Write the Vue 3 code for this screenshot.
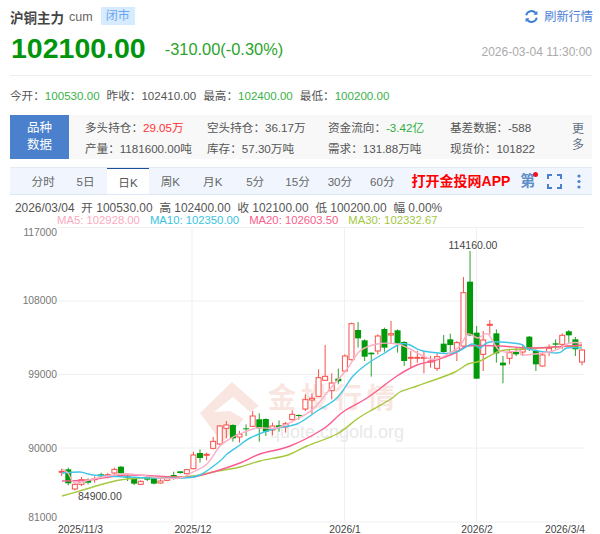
<script setup>
const z5 = [
['r',211,212,203,225],['g',205,247,200,253],['r',250,264,247,268],['r',236,250,228,255],['g',236,245,232,250],['r',233,236,226,245],['g',220,226,215,232],['r',221,225,216,232],['r',205,216,200,220],['g',197,217,195,219],
['g',226,230,222,240],['g',233,248,228,252],['r',241,250,238,252],['g',229,236,226,240],['g',232,248,228,250],['r',240,246,235,248],['r',230,238,226,241],['g',222,230,212,236],['g',211,216,210,218],['r',206,218,204,220],
['r',162,203,152,205],['g',156,171,145,185],['r',160,162,155,178],['r',121,142,108,145],['r',75,129,72,132],['r',72,82,60,112],['g',72,112,70,122],['r',100,108,90,125]]
const z6 = [
['g',322,325,310,345],['r',285,316,270,318],['g',295,322,277,362],['g',294,332,292,345],['r',315,327,305,343],['g',313,318,298,332],['r',308,318,303,335],['r',280,296,268,298],['g',282,285,280,296],['r',236,264,220,270],
['r',232,237,218,280],['r',170,226,145,228],['r',166,178,72,180],['r',186,209,157,235],['g',173,181,143,190],['r',105,150,100,155],['r',8,116,5,118],['g',27,52,3,80],['g',58,107,55,120],['g',95,100,95,167],
['r',45,90,40,100],['g',24,80,20,92]]
const z8 = [['r',98,102,60,127],['g',88,127,85,155]]
const z7 = [
['g',318,375,315,390],['r',364,366,345,395],['r',364,366,345,380],['r',364,366,345,412],['r',375,378,360,395],['r',362,397,352,405],['g',323,348,297,350],['g',310,327,293,350],['r',320,345,315,375],['r',170,330,123,332],
['g',137,298,45,300],['g',290,428,270,428],['r',312,355,285,405],['r',265,268,252,295],['g',292,352,280,380],['g',380,388,360,442],['r',350,367,340,385],['g',348,355,335,360],['r',340,348,325,360],['g',302,340,300,345],
['g',345,385,340,405],['r',357,390,345,392],['r',337,349,325,360],['g',322,326,310,340],['r',298,325,292,340],['g',286,298,282,320],['g',310,340,303,360],['r',342,378,340,388]]

const toReal = (rows, y0) => rows.map(([c, a, b, t, u]) => ({
  c, top: y0 + a / 3, bot: y0 + b / 3, wt: y0 + t / 3, wb: y0 + u / 3
}))
const candles = [...toReal(z5, 400), ...toReal(z6, 320), ...toReal(z8, 300), ...toReal(z7, 235)]
  .map((d, i) => ({ ...d, x: 61.7 + i * 6.586, h: Math.max(d.bot - d.top, 1) }))

// Catmull-Rom through the sampled points, so the averages read as curves.
const smooth = (str) => {
  const p = str.split(' ').map((s) => s.split(',').map(Number))
  let d = `M${p[0][0]} ${p[0][1]}`
  for (let i = 0; i < p.length - 1; i++) {
    const a = p[i - 1] || p[i], b = p[i], c = p[i + 1], e = p[i + 2] || c
    const k = 6
    d += `C${(b[0] + (c[0] - a[0]) / k).toFixed(1)} ${(b[1] + (c[1] - a[1]) / k).toFixed(1)} ${(c[0] - (e[0] - b[0]) / k).toFixed(1)} ${(c[1] - (e[1] - b[1]) / k).toFixed(1)} ${c[0]} ${c[1]}`
  }
  return d
}
const lines = [
  { color: '#a6c83e', pts: '62,495 83,489 103,483 120,479 140,477 173,476 193,475 213,471 240,466 260,460 288,454 307,445 337,433 357,418 370,410 391,398 400,391 417,385 437,378 455,371 468,363 480,360 500,350 520,348 573,345 582,345' },
  { color: '#fb5c8e', pts: '62,480 90,479 127,474 173,476 193,476 213,471 240,462 260,453 290,445 323,428 343,411 367,397 397,375 417,364 433,360 455,352 468,345 500,345 533,347 582,344' },
  { color: '#3fc6e6', pts: '62,472 80,471 93,474 127,476 153,477 183,477 200,474 220,460 227,453 240,444 250,437 273,428 297,423 317,410 337,397 353,375 367,363 383,353 400,343 410,344 423,350 453,352 472,343 480,347 490,341 520,343 528,348 557,352 567,347 582,347' },
  { color: '#fcaec4', pts: '62,468 68,472 75,482 93,478 120,473 140,474 160,477 180,477 193,471 207,463 220,445 233,436 240,433 257,427 277,427 297,418 313,408 330,388 347,368 360,350 377,343 397,343 410,348 427,357 437,358 450,352 460,345 468,333 478,337 488,333 500,350 520,350 523,354 553,350 570,342 582,342' }
].map((l) => ({ color: l.color, d: smooth(l.pts) }))
const hGrid = [226.5, 300, 373.5, 447, 521]
const vGrid = [192, 344.5, 476.5]
const yLabels = [['117000', 235], ['108000', 303], ['99000', 377], ['90000', 451], ['81000', 520]]
const xLabels = [['2025/11/3', 58, 'start'], ['2025/12', 193, 'middle'], ['2026/1', 345, 'middle'], ['2026/2', 477, 'middle'], ['2026/3/4', 585, 'end']]
const tabs = ['分时', '5日', '日K', '周K', '月K', '5分', '15分', '30分', '60分']
const mas = [
  { t: 'MA5: 102928.00', c: 'pink' }, { t: 'MA10: 102350.00', c: 'cyan' },
  { t: 'MA20: 102603.50', c: 'rose' }, { t: 'MA30: 102332.67', c: 'olive' }
]
</script>

<template>
  <div class="page">
    <header class="top">
      <div class="title">
        <strong>沪铜主力</strong><span class="code">cum</span><span class="tag">闭市</span>
      </div>
      <div class="refresh">
        <svg width="15" height="15" viewBox="0 0 15 15" fill="none">
          <path d="M2.2 6.2A5.4 5.4 0 0 1 11.6 4" stroke="#3f7fd6" stroke-width="2"/>
          <path d="M12.8 8.8A5.4 5.4 0 0 1 3.4 11" stroke="#3f7fd6" stroke-width="2"/>
          <path d="M13.4 1.8v4h-4zM1.6 13.2v-4h4z" fill="#3f7fd6"/>
        </svg>
        <span>刷新行情</span>
      </div>
    </header>
    <div class="price-row">
      <span class="price">102100.00</span>
      <span class="change">-310.00(-0.30%)</span>
      <span class="time">2026-03-04 11:30:00</span>
    </div>
    <div class="stats">
      <span>今开：<b>100530.00</b></span>
      <span>昨收：<i>102410.00</i></span>
      <span>最高：<b>102400.00</b></span>
      <span>最低：<b>100200.00</b></span>
    </div>
    <section class="panel">
      <div class="panel-head">品种<br>数据</div>
      <div class="panel-grid">
        <span>多头持仓：<em class="up">29.05万</em></span>
        <span>空头持仓：36.17万</span>
        <span>资金流向：<em class="down">-3.42亿</em></span>
        <span>基差数据：-588</span>
        <span>产量：1181600.00吨</span>
        <span>库存：57.30万吨</span>
        <span>需求：131.88万吨</span>
        <span>现货价：101822</span>
      </div>
      <div class="more">更多</div>
    </section>
    <nav class="tabs">
      <span v-for="t in tabs" :key="t" class="tab" :class="{ active: t === '日K' }">{{ t }}</span>
      <strong class="promo">打开金投网APP</strong>
      <span class="ce">第<i class="dot"></i></span>
      <svg class="full" width="15" height="15" viewBox="0 0 15 15" fill="none" stroke="#4a80cc" stroke-width="2">
        <path d="M1 5V1h4M10 1h4v4M14 10v4h-4M5 14H1v-4"/>
      </svg>
      <svg class="kebab" width="4" height="15" viewBox="0 0 4 15" fill="#4a80cc">
        <circle cx="2" cy="2" r="1.6"/><circle cx="2" cy="7.5" r="1.6"/><circle cx="2" cy="13" r="1.6"/>
      </svg>
    </nav>
    <div class="quote">2026/03/04&nbsp; 开 100530.00&nbsp; 高 102400.00&nbsp; 收 102100.00&nbsp; 低 100200.00&nbsp; 幅 0.00%</div>
    <div class="ma">
      <span v-for="m in mas" :key="m.t" :class="m.c">{{ m.t }}</span>
    </div>
    <svg class="chart" width="600" height="308" viewBox="0 226 600 308">
      <line v-for="y in hGrid" :key="y" x1="58" x2="584" :y1="y" :y2="y" stroke="#f0f0f0"/>
      <line v-for="x in vGrid" :key="x" :x1="x" :x2="x" y1="226" y2="521" stroke="#f0f0f0"/>
      <g fill="#f9e6e1">
        <path d="M232 381 L259 405 L250 411 L233 396 L214 411 L230 410 L244 418 L222 442 L200 412 Z"/>
        <text x="268" y="407" class="wm-cn">金投行情</text>
      </g>
      <text x="270" y="437" class="wm-en">quote.cngold.org</text>
      <g v-for="(d, i) in candles" :key="i">
        <line :x1="d.x" :x2="d.x" :y1="d.wt" :y2="d.wb" :stroke="d.c === 'r' ? '#f8504a' : '#2f9f2f'"/>
        <rect v-if="d.c === 'r'" :x="d.x - 2.5" :y="d.top" width="5" :height="d.h" fill="#fff" stroke="#f8504a"/>
        <rect v-else :x="d.x - 3" :y="d.top" width="6" :height="d.h" fill="#009a0a"/>
      </g>
      <path v-for="l in lines" :key="l.color" :d="l.d" fill="none" :stroke="l.color" stroke-width="1.4"/>
      <text x="473" y="248" class="note" text-anchor="middle">114160.00</text>
      <text x="78" y="499" class="note">84900.00</text>
      <text v-for="l in yLabels" :key="l[0]" x="57" :y="l[1]" class="axis" text-anchor="end">{{ l[0] }}</text>
      <text v-for="l in xLabels" :key="l[0]" :x="l[1]" y="531.7" class="axis dark" :text-anchor="l[2]">{{ l[0] }}</text>
    </svg>
  </div>
</template>

<style scoped>
.page {
  width: 600px;
  height: 534px;
  overflow: hidden;
  background: #fff;
  box-sizing: border-box;
  font-family: "Liberation Sans", "Noto Sans CJK SC", sans-serif;
  font-size: 11.6px;
  color: #555;
}
.top {
  display: flex;
  justify-content: space-between;
  align-items: center;
  height: 18px;
  padding: 7px 7px 0 10px;
}
.title { display: flex; align-items: center; }
.title strong { font-size: 13.5px; color: #444; padding-top: 1px; }
.code { font-size: 12.5px; color: #666; margin-left: 5px; padding-top: 1px; }
.tag {
  margin-left: 8px;
  padding: 0 5px;
  height: 18px;
  line-height: 18px;
  font-size: 12px;
  background: #d7ebff;
  color: #6aa6ee;
}
.refresh { display: flex; align-items: center; gap: 5px; color: #4d7fd8; }
.refresh span { font-size: 12.2px; }
.price-row {
  display: flex;
  align-items: flex-start;
  height: 51px;
  margin: 0 8px 0 10px;
  padding-left: 1px;
  border-bottom: 1px solid #eee;
  box-sizing: border-box;
}
.price { margin-top: 6px; font-size: 28.5px; line-height: 34px; font-weight: 700; color: #00950a; }
.change { margin: 13px 0 0 19px; font-size: 16.4px; line-height: 22px; color: #2ba32b; }
.time { margin: 20px 0 0 auto; font-size: 12px; line-height: 14px; color: #aaa; }
.stats { display: flex; gap: 7px; padding: 11px 0 0 10px; height: 29px; box-sizing: border-box; line-height: 18px; }
.stats b { font-weight: 400; color: #3bb14a; }
.stats i { font-style: normal; }
.panel {
  display: flex;
  height: 44px;
  margin: 10px 8px 0 10px;
  background: #f8f8f8;
}
.panel-head {
  flex: none;
  width: 59px;
  background: #4a80cc;
  color: #fff;
  font-size: 12.5px;
  line-height: 17px;
  text-align: center;
  padding-top: 5px;
  box-sizing: border-box;
}
.panel-grid {
  flex: 1;
  display: grid;
  grid-template-columns: 122px 121px 122px 1fr;
  grid-auto-rows: 21px;
  padding: 2px 0 0 16px;
  line-height: 21px;
}
.panel-grid em { font-style: normal; }
.up { color: #f33; }
.down { color: #2fae3f; }
.more { flex: none; width: 12px; margin: 6px 8px 0 0; font-size: 12px; line-height: 16px; color: #5f7086; }
.tabs {
  display: flex;
  align-items: stretch;
  height: 28px;
  margin: 8px 8px 0 10px;
  padding-left: 12px;
  background: #f1f6fe;
  border-top: 1px solid #e4ebf6;
  border-bottom: 1px solid #dde6f3;
  box-sizing: border-box;
  position: relative;
}
.tab {
  flex: none;
  width: 42.4px;
  text-align: center;
  line-height: 28px;
  color: #666;
  box-sizing: border-box;
}
.tab.active {
  background: #fff;
  border-top: 1px solid #1f4f96;
  line-height: 27px;
  color: #555;
}
.promo { margin-left: 8px; font-size: 14px; line-height: 26px; color: #f00; }
.ce { position: relative; margin-left: 10px; font-size: 15px; line-height: 26px; font-weight: 700; color: #5f8fca; }
.dot { position: absolute; right: -3px; top: 4px; width: 5px; height: 5px; border-radius: 50%; background: #f0102a; }
.full { margin: 6px 0 0 12px; }
.kebab { margin: 6px 0 0 15px; }
.quote { padding-left: 15px; height: 14px; line-height: 14px; margin-top: 6px; font-size: 11.9px; white-space: nowrap; }
.ma { display: flex; gap: 10px; padding-left: 57px; height: 12px; line-height: 10px; font-size: 11.3px; white-space: nowrap; }
.pink { color: #fbaac0; }
.cyan { color: #38c4de; }
.rose { color: #f9608c; }
.olive { color: #a3c73f; }
.chart { display: block; }
.note { font-size: 10.5px; fill: #444; }
.axis { font-size: 10.3px; fill: #777; }
.axis.dark { fill: #444; }
.wm-cn { font-size: 28px; font-weight: 700; letter-spacing: 5px; }
.wm-en { font-size: 18px; fill: #e9e9e9; }
</style>
<style>
html, body { margin: 0; background: #fff; }
</style>
